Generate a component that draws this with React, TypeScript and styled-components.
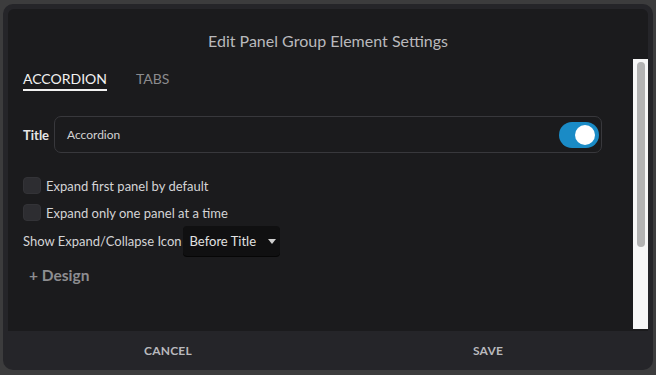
import React from "react";
import styled, { createGlobalStyle } from "styled-components";

const Global = createGlobalStyle`
  html, body { margin: 0; padding: 0; background: #3c3c3d; }
  body { font-family: Lato, "Open Sans", sans-serif; }
  * { box-sizing: border-box; }
`;

const Page = styled.div`
  width: 656px;
  height: 375px;
  padding: 4px 3px 5px 3px;
`;

const Dialog = styled.div`
  width: 650px;
  height: 366px;
  background: #252529;
  border-radius: 10px;
  padding: 5px 5px 0 5px;
  display: flex;
  flex-direction: column;
`;

const Content = styled.div`
  flex: 1;
  background: #1b1b1d;
  border-radius: 6px 6px 0 0;
  display: flex;
  flex-direction: column;
  min-height: 0;
`;

const Header = styled.div`
  height: 50px;
  padding-top: 22px;
  text-align: center;
  font-size: 16px;
  line-height: 20px;
  color: #b9b9bc;
`;

const Body = styled.div`
  flex: 1;
  display: flex;
  min-height: 0;
`;

const Main = styled.div`
  flex: 1;
  padding: 0 0 0 15px;
  display: flex;
  flex-direction: column;
`;

const Track = styled.div`
  width: 15px;
  margin-bottom: 2px;
  background: #f7f7f7;
  padding: 3px 0 0 4px;
`;

const Thumb = styled.div`
  width: 8px;
  height: 185px;
  border-radius: 4px;
  background: #b3b3b3;
`;

const Tabs = styled.div`
  display: flex;
  gap: 29px;
`;

const Tab = styled.div<{ $active?: boolean }>`
  padding-top: 12px;
  font-size: 14px;
  line-height: 16px;
  color: ${(p) => (p.$active ? "#f2f2f2" : "#8b8b8e")};
  padding-bottom: 2px;
  border-bottom: 2px solid ${(p) => (p.$active ? "#f2f2f2" : "transparent")};
  height: 32px;
  box-sizing: border-box;
  margin-bottom: 25px;
`;

const TitleRow = styled.div`
  display: flex;
  align-items: center;
  gap: 6px;
  width: 579px;
  margin-bottom: 24px;
`;

const FieldLabel = styled.div`
  font-size: 13px;
  font-weight: 700;
  color: #e6e6e6;
  width: 25px;
`;

const InputBox = styled.div`
  flex: 1;
  height: 37px;
  border: 1px solid #38383c;
  border-radius: 7px;
  display: flex;
  align-items: center;
  justify-content: space-between;
  padding: 0 2px 0 12px;
  font-size: 12px;
  color: #d2d2d2;
`;

const Toggle = styled.div<{ $on?: boolean }>`
  width: 40px;
  height: 26px;
  border-radius: 13px;
  background: ${(p) => (p.$on ? "#1a8bc6" : "#444")};
  display: flex;
  align-items: center;
  justify-content: ${(p) => (p.$on ? "flex-end" : "flex-start")};
  padding: 0 4px;
`;

const Knob = styled.div`
  width: 20px;
  height: 20px;
  border-radius: 50%;
  background: #ffffff;
`;

const CheckRow = styled.label`
  display: flex;
  align-items: center;
  gap: 5px;
  height: 17px;
  margin-bottom: 10px;
  font-size: 13px;
  color: #d4d4d6;
`;

const Box = styled.span`
  width: 18px;
  height: 17px;
  border-radius: 4px;
  background: #2d2d31;
  border: 1px solid #333337;
`;

const SelectRow = styled.div`
  display: flex;
  align-items: center;
  gap: 1px;
  margin-top: -5px;
  font-size: 13px;
  color: #d4d4d6;
`;

const Select = styled.div`
  width: 97px;
  height: 30px;
  background: #101011;
  border-radius: 4px;
  box-shadow: 0 1px 0 #060606;
  display: flex;
  align-items: center;
  justify-content: space-between;
  padding: 0 4px 0 7px;
  color: #e2e2e2;
  font-size: 13px;
`;

const Caret = styled.span`
  width: 0;
  height: 0;
  border-left: 4.5px solid transparent;
  border-right: 4.5px solid transparent;
  border-top: 5px solid #cfcfcf;
`;

const DesignLink = styled.div`
  margin: 9px 0 0 6px;
  font-size: 15.5px;
  line-height: 20px;
  font-weight: 700;
  color: #8d8d90;
`;

const Footer = styled.div`
  height: 39px;
  display: flex;
`;

const FooterButton = styled.button`
  flex: 1;
  background: transparent;
  border: none;
  font-family: Lato, "Open Sans", sans-serif;
  font-size: 12px;
  font-weight: 700;
  letter-spacing: 0.2px;
  color: #b9b9bd;
  padding: 0;
  cursor: pointer;
`;

export default function App() {
  return (
    <>
      <Global />
      <Page>
        <Dialog>
          <Content>
            <Header>Edit Panel Group Element Settings</Header>
            <Body>
              <Main>
                <Tabs>
                  <Tab $active>ACCORDION</Tab>
                  <Tab>TABS</Tab>
                </Tabs>
                <TitleRow>
                  <FieldLabel>Title</FieldLabel>
                  <InputBox>
                    <span>Accordion</span>
                    <Toggle $on>
                      <Knob />
                    </Toggle>
                  </InputBox>
                </TitleRow>
                <CheckRow>
                  <Box />
                  Expand first panel by default
                </CheckRow>
                <CheckRow>
                  <Box />
                  Expand only one panel at a time
                </CheckRow>
                <SelectRow>
                  <span>Show Expand/Collapse Icon</span>
                  <Select>
                    <span>Before Title</span>
                    <Caret />
                  </Select>
                </SelectRow>
                <DesignLink>+ Design</DesignLink>
              </Main>
              <Track>
                <Thumb />
              </Track>
            </Body>
          </Content>
          <Footer>
            <FooterButton>CANCEL</FooterButton>
            <FooterButton>SAVE</FooterButton>
          </Footer>
        </Dialog>
      </Page>
    </>
  );
}
